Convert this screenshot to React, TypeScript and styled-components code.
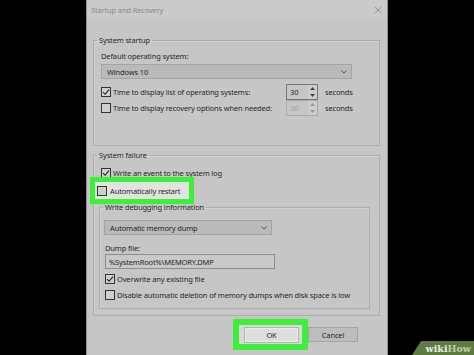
import React, { FC } from 'react';
import styled, { createGlobalStyle } from 'styled-components';

const GlobalStyle = createGlobalStyle`
    html, body {
        margin: 0;
        padding: 0;
        background: #000;
    }
    body {
        width: 474px;
        height: 355px;
        overflow: hidden;
        font-family: "Noto Sans", "Open Sans", sans-serif;
    }
`;

const Screen = styled.div`
    position: relative;
    display: flex;
    width: 474px;
    height: 355px;
    padding-left: 86px;
    box-sizing: border-box;
    background: #000;
    overflow: hidden;
`;

const Dialog = styled.div`
    display: flex;
    flex-direction: column;
    width: 302px;
    height: 100%;
    box-sizing: border-box;
    border-left: 1px solid #8e8e8e;
    border-right: 1px solid #8e8e8e;
    background: #c6c6c6;
    color: #262626;
    font-size: 7.5px;
    letter-spacing: -0.15px;
    line-height: 10px;
`;

const TitleBar = styled.div`
    display: flex;
    align-items: center;
    justify-content: space-between;
    height: 20px;
    padding: 0 5px 0 4px;
    background: #cacaca;
    color: #8a8a8a;
`;

const Body = styled.div`
    display: flex;
    flex-direction: column;
    padding: 0 7px 0 6px;
`;

const Group = styled.fieldset<{ $pad: string; $top: number }>`
    margin: ${p => p.$top}px 0 0;
    padding: ${p => p.$pad};
    min-width: 0;
    border: 1px solid #adadad;
    box-shadow: inset 1px 1px 0 #d2d2d2;
    display: flex;
    flex-direction: column;
`;

const Legend = styled.legend<{ $shift: number }>`
    padding: 0 2px;
    margin-left: ${p => p.$shift}px;
    line-height: 10px;
    color: #262626;
`;

const Caption = styled.div<{ $top?: number; $left?: number }>`
    margin-top: ${p => p.$top ?? 0}px;
    margin-left: ${p => p.$left ?? 0}px;
    height: 10px;
    line-height: 10px;
`;

const SelectBox = styled.div<{ $width: number; $top?: number }>`
    display: flex;
    align-items: center;
    justify-content: space-between;
    width: ${p => p.$width}px;
    height: 15px;
    margin-top: ${p => p.$top ?? 0}px;
    padding: 0 4px 0 5px;
    box-sizing: border-box;
    border: 1px solid #a4a4a4;
    background: #bababa;
`;

const TextBox = styled.div<{ $width: number }>`
    display: flex;
    align-items: center;
    width: ${p => p.$width}px;
    height: 15px;
    margin: 1px 0 0 1px;
    padding-left: 3px;
    box-sizing: border-box;
    border: 1px solid #8e8e8e;
    background: #c9c9c9;
`;

const TimeRow = styled.div<{ $top?: number }>`
    display: grid;
    grid-template-columns: 185px 32px auto;
    align-items: center;
    height: 16px;
    margin-top: ${p => p.$top ?? 0}px;
`;

const CheckRow = styled.div<{ $top?: number; $left?: number }>`
    display: flex;
    align-items: center;
    gap: 2px;
    height: 16px;
    margin-top: ${p => p.$top ?? 0}px;
    padding-left: ${p => p.$left ?? 0}px;
`;

const HighlightRow = styled.div`
    display: flex;
    align-items: center;
    gap: 3px;
    width: fit-content;
    height: 17px;
    margin: 1px 0 0 -4px;
    padding: 0 9px 0 2px;
    background: #e2e2e2;
    outline: 5px solid #3cf03a;
`;

const Box = styled.span`
    display: inline-flex;
    width: 10px;
    height: 10px;
    box-sizing: border-box;
    border: 1px solid #333;
    background: #cfcfcf;
`;

const Spinner = styled.div<{ $disabled?: boolean }>`
    display: flex;
    width: 32px;
    height: 16px;
    box-sizing: border-box;
    border: 1px solid ${p => (p.$disabled ? '#ababab' : '#777')};
    color: ${p => (p.$disabled ? '#9b9b9b' : '#262626')};
`;

const SpinValue = styled.span`
    flex: 1;
    padding-left: 3px;
    line-height: 14px;
`;

const SpinArrows = styled.span`
    display: flex;
    flex-direction: column;
    align-items: center;
    justify-content: space-around;
    width: 9px;
    background: #cdcdcd;
`;

const Seconds = styled.span`
    margin-left: 7px;
`;

const ButtonRow = styled.div`
    display: flex;
    align-items: center;
    justify-content: flex-end;
    margin-top: 3px;
    padding-right: 22px;
`;

const OkFrame = styled.div`
    padding: 2px 3px 1px 5px;
    border: 6px solid #3cf03a;
    background: #d9d9d9;
`;

const Button = styled.div<{ $primary?: boolean }>`
    display: flex;
    align-items: center;
    justify-content: center;
    width: ${p => (p.$primary ? 55 : 50)}px;
    height: ${p => (p.$primary ? 16 : 15)}px;
    box-sizing: border-box;
    border: 1px solid ${p => (p.$primary ? '#b4b4b4' : '#a4a4a4')};
    background: ${p => (p.$primary ? '#dedede' : '#bdbdbd')};
    box-shadow: ${p => (p.$primary ? 'inset 0 0 0 1px #ececec' : 'none')};
`;

const Watermark = styled.div`
    position: absolute;
    right: 0;
    bottom: 0;
    display: flex;
    align-items: center;
    justify-content: flex-end;
    width: 62px;
    height: 14px;
    padding-right: 3px;
    box-sizing: border-box;
    background: #5f7b42;
    clip-path: polygon(9px 0, 100% 0, 100% 100%, 0 100%);
    font-family: "DejaVu Serif", "Liberation Serif", serif;
    font-weight: bold;
    font-size: 9.5px;
`;

const Wiki = styled.span`
    color: #e9eee2;
`;

const How = styled.span`
    color: #bfcdb0;
`;

const Chevron: FC = () => (
    <svg width="6" height="4" viewBox="0 0 6 4">
        <path d="M0.5 0.5 L3 3 L5.5 0.5" fill="none" stroke="#555" strokeWidth="1" />
    </svg>
);

const Close: FC = () => (
    <svg width="8" height="8" viewBox="0 0 8 8">
        <path d="M0.5 0.5 L7.5 7.5 M7.5 0.5 L0.5 7.5" stroke="#8c8c8c" strokeWidth="0.9" />
    </svg>
);

const Check: FC<{ checked?: boolean }> = ({ checked }) => (
    <Box>
        {checked ? (
            <svg width="8" height="8" viewBox="0 0 8 8">
                <path d="M1 4.2 L3.1 6.3 L7 1.6" fill="none" stroke="#222" strokeWidth="1.1" />
            </svg>
        ) : null}
    </Box>
);

const SpinBox: FC<{ value: string; disabled?: boolean }> = ({ value, disabled }) => {
    const c = disabled ? '#9b9b9b' : '#444';
    return (
        <Spinner $disabled={disabled}>
            <SpinValue>{value}</SpinValue>
            <SpinArrows>
                <svg width="5" height="3" viewBox="0 0 5 3"><path d="M0 3 L2.5 0 L5 3Z" fill={c} /></svg>
                <svg width="5" height="3" viewBox="0 0 5 3"><path d="M0 0 L2.5 3 L5 0Z" fill={c} /></svg>
            </SpinArrows>
        </Spinner>
    );
};

export default function App() {
    return (
        <Screen>
            <GlobalStyle />
            <Dialog>
                <TitleBar>
                    <span>Startup and Recovery</span>
                    <Close />
                </TitleBar>
                <Body>
                    <Group $top={15} $pad="6px 27px 29px 7px">
                        <Legend $shift={-4}>System startup</Legend>
                        <Caption>Default operating system:</Caption>
                        <SelectBox $width={251} $top={3}>
                            <span>Windows 10</span>
                            <Chevron />
                        </SelectBox>
                        <TimeRow $top={5}>
                            <CheckRow>
                                <Check checked />
                                <span>Time to display list of operating systems:</span>
                            </CheckRow>
                            <SpinBox value="30" />
                            <Seconds>seconds</Seconds>
                        </TimeRow>
                        <TimeRow>
                            <CheckRow>
                                <Check />
                                <span>Time to display recovery options when needed:</span>
                            </CheckRow>
                            <SpinBox value="30" disabled />
                            <Seconds>seconds</Seconds>
                        </TimeRow>
                    </Group>

                    <Group $top={4} $pad="5px 9px 6px 5px">
                        <Legend $shift={-2}>System failure</Legend>
                        <CheckRow $left={2}>
                            <Check checked />
                            <span>Write an event to the system log</span>
                        </CheckRow>
                        <HighlightRow>
                            <Check />
                            <span>Automatically restart</span>
                        </HighlightRow>
                        <Group $top={3} $pad="8px 9px 5px 4px">
                            <Legend $shift={-1}>Write debugging information</Legend>
                            <SelectBox $width={168}>
                                <span>Automatic memory dump</span>
                                <Chevron />
                            </SelectBox>
                            <Caption $top={8} $left={1}>Dump file:</Caption>
                            <TextBox $width={170}>%SystemRoot%\MEMORY.DMP</TextBox>
                            <CheckRow $top={2} $left={1}>
                                <Check checked />
                                <span>Overwrite any existing file</span>
                            </CheckRow>
                            <CheckRow $left={1}>
                                <Check />
                                <span>Disable automatic deletion of memory dumps when disk space is low</span>
                            </CheckRow>
                        </Group>
                    </Group>

                    <ButtonRow>
                        <OkFrame>
                            <Button $primary>OK</Button>
                        </OkFrame>
                        <Button>Cancel</Button>
                    </ButtonRow>
                </Body>
            </Dialog>
            <Watermark>
                <Wiki>wiki</Wiki>
                <How>How</How>
            </Watermark>
        </Screen>
    );
}
